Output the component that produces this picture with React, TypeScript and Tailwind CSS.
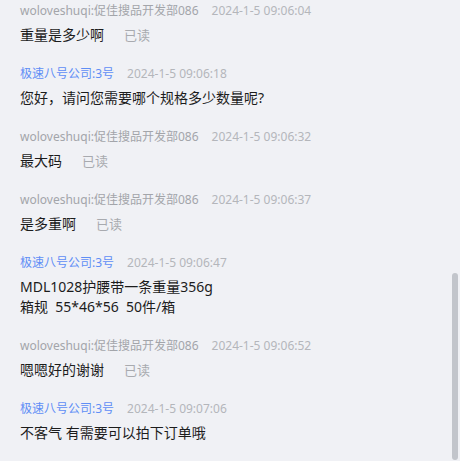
const BUYER = "woloveshuqi:促佳搜品开发部086"
const SELLER = "极速八号公司:3号"

type Msg = { from: "buyer" | "seller"; time: string; lines: string[]; read?: boolean }

const messages: Msg[] = [
  { from: "buyer", time: "2024-1-5 09:06:04", lines: ["重量是多少啊"], read: true },
  { from: "seller", time: "2024-1-5 09:06:18", lines: ["您好，请问您需要哪个规格多少数量呢?"] },
  { from: "buyer", time: "2024-1-5 09:06:32", lines: ["最大码"], read: true },
  { from: "buyer", time: "2024-1-5 09:06:37", lines: ["是多重啊"], read: true },
  { from: "seller", time: "2024-1-5 09:06:47", lines: ["MDL1028护腰带一条重量356g", "箱规  55*46*56  50件/箱"] },
  { from: "buyer", time: "2024-1-5 09:06:52", lines: ["嗯嗯好的谢谢"], read: true },
  { from: "seller", time: "2024-1-5 09:07:06", lines: ["不客气 有需要可以拍下订单哦"] },
]

function MessageBlock({ msg }: { msg: Msg }) {
  return (
    <div className="flex flex-col gap-1 pb-[19px]">
      <div className="flex items-center gap-[13px] text-[12px] leading-5">
        <span className={msg.from === "seller" ? "text-[#5f8ef5]" : "text-[#a3a5aa]"}>
          {msg.from === "seller" ? SELLER : BUYER}
        </span>
        <span className="text-[#b4b6bb]">{msg.time}</span>
      </div>
      <div className="flex items-start gap-5">
        <div className="text-[14px] leading-5 text-[#1c1c1c] whitespace-pre">
          {msg.lines.map((l) => (
            <div key={l}>{l}</div>
          ))}
        </div>
        {msg.read && <span className="text-[13px] leading-5 text-[#a8aaaf]">已读</span>}
      </div>
    </div>
  )
}

export default function App() {
  return (
    <div
      className="relative h-[461px] w-[460px] overflow-hidden bg-[#f0f1f5]"
      style={{ fontFamily: '"Noto Sans", "Noto Sans CJK SC", sans-serif' }}
    >
      <div className="flex flex-col px-5 pt-px">
        {messages.map((m) => (
          <MessageBlock key={m.time} msg={m} />
        ))}
      </div>
      <div className="absolute right-[2px] top-[273px] h-[187px] w-[6px] rounded-full bg-[#c2c5cb]" />
    </div>
  )
}
